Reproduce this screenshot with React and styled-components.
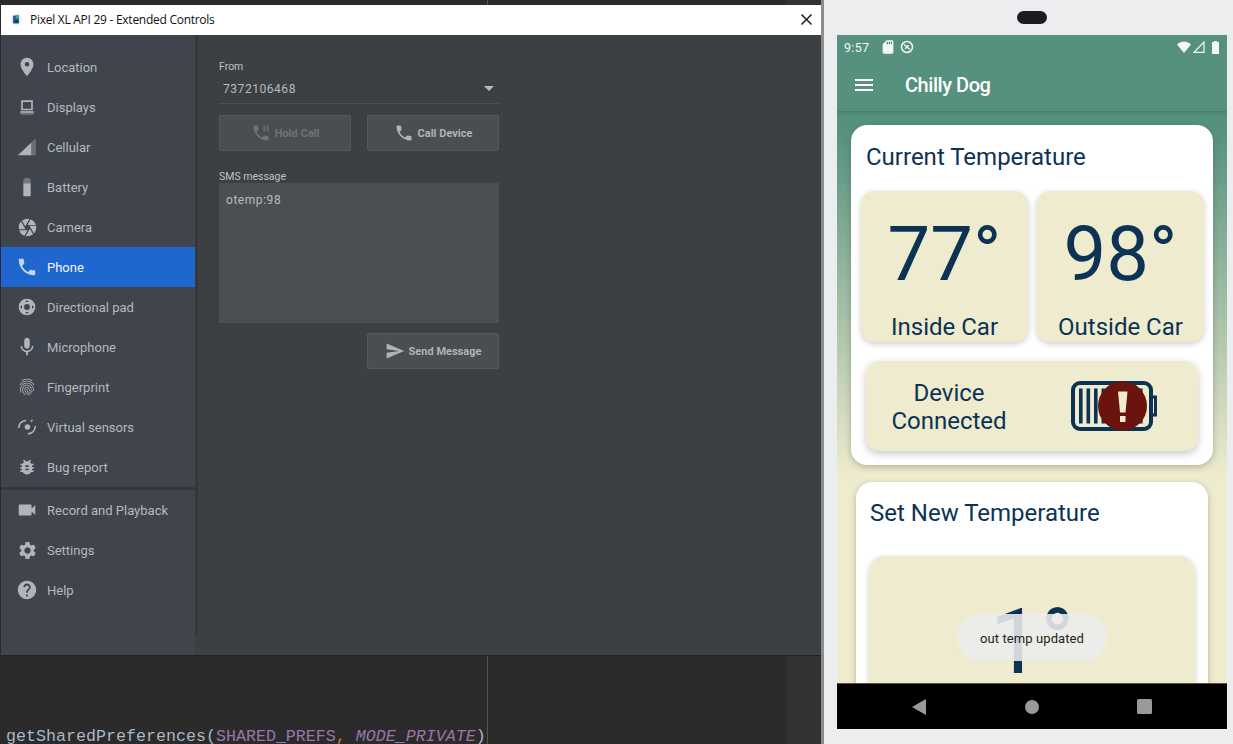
import React from "react";
import styled, { createGlobalStyle } from "styled-components";
import {
  MdLocationOn, MdCamera, MdPhone, MdMic, MdFingerprint, MdBugReport,
  MdVideocam, MdSettings, MdHelp, MdPhonePaused, MdSend, MdMenu, MdSdCard, MdClose,
} from "react-icons/md";

const Global = createGlobalStyle`
  html, body { margin: 0; padding: 0; background: #2b2b2b; overflow: hidden; }
  * { box-sizing: border-box; }
`;

const Desktop = styled.div`
  position: relative;
  width: 1233px;
  height: 744px;
  overflow: hidden;
  background: #2b2b2b;
  font-family: Roboto, sans-serif;
`;

/* ---------- IDE behind the windows ---------- */
const Ide = styled.div`
  position: absolute;
  inset: 0 412px 0 0;
  background: linear-gradient(to right, #2b2b2b 786px, #313335 786px);
`;
const Margin = styled.div`
  position: absolute;
  left: 487px;
  top: 0;
  bottom: 0;
  width: 1px;
  background: #555;
`;
const CodeLine = styled.div`
  position: absolute;
  left: 6px;
  top: ${(p) => p.$top}px;
  font: 16.67px/20px "Liberation Mono", monospace;
  color: #a9b7c6;
  white-space: pre;
`;
const Const = styled.span`
  color: #9876aa;
  font-style: ${(p) => (p.$italic ? "italic" : "normal")};
`;
const Comma = styled.span`
  color: #cc7832;
`;

/* ---------- Extended controls window ---------- */
const ControlsWindow = styled.div`
  position: absolute;
  left: 1px;
  top: 5px;
  width: 820px;
  height: 650px;
  display: flex;
  flex-direction: column;
  background: #3c4043;
  box-shadow: 0 1px 0 #222;
`;
const TitleBar = styled.div`
  height: 30px;
  flex: none;
  background: #fff;
  display: flex;
  align-items: center;
  padding: 0 0 1px 10px;
  color: #111;
  font: 12px "Open Sans", sans-serif;
`;
const TitleText = styled.span`
  margin-left: 8px;
  flex: 1;
  letter-spacing: -0.27px;
`;
const CloseButton = styled.span`
  margin-right: 5px;
  display: flex;
  font-size: 19px;
  color: #222;
`;
const WindowBody = styled.div`
  flex: 1;
  display: flex;
  min-height: 0;
`;
const Sidebar = styled.nav`
  width: 194px;
  flex: none;
  background: #40444c;
  padding-top: 12px;
  display: flex;
  flex-direction: column;
`;
const SideDividerColumn = styled.div`
  width: 3px;
  height: 600px;
  flex: none;
  background: #35383b;
`;
const NavRow = styled.div`
  height: 40px;
  flex: none;
  display: flex;
  align-items: center;
  padding-left: 14px;
  gap: 8px;
  font-size: 13px;
  color: ${(p) => (p.$active ? "#f2f5fa" : "#b6b9bd")};
  background: ${(p) => (p.$active ? "#1f67cf" : "transparent")};
`;
const NavIcon = styled.span`
  width: 24px;
  height: 24px;
  display: flex;
  align-items: center;
  justify-content: center;
  font-size: ${(p) => p.$size || 20}px;
  color: ${(p) => (p.$active ? "#c4d6f0" : "#b2b4b7")};
  svg { display: block; }
`;
const NavDivider = styled.div`
  height: 3px;
  flex: none;
  background: #35383b;
`;
const Pane = styled.div`
  flex: 1;
  padding: 25px 0 0 21px;
`;
const PaneColumn = styled.div`
  width: 280px;
  display: flex;
  flex-direction: column;
`;
const SmallLabel = styled.div`
  font-size: 10.5px;
  line-height: 14px;
  color: #bfc1c3;
  margin-top: ${(p) => p.$top || 0}px;
`;
const Select = styled.div`
  margin-top: 4px;
  height: 26px;
  display: flex;
  align-items: center;
  justify-content: space-between;
  padding: 0 5px 4px 4px;
  border-bottom: 1px solid #4c5053;
  font-size: 12px;
  letter-spacing: 0.55px;
  color: #b9bbbd;
`;
const Caret = styled.span`
  width: 0;
  height: 0;
  border-left: 5px solid transparent;
  border-right: 5px solid transparent;
  border-top: 5px solid #b9bbbd;
`;
const ButtonRow = styled.div`
  display: flex;
  justify-content: ${(p) => (p.$end ? "flex-end" : "space-between")};
  margin-top: ${(p) => p.$top}px;
`;
const ActionButton = styled.div`
  width: 132px;
  height: 36px;
  display: flex;
  align-items: center;
  justify-content: center;
  gap: 4px;
  background: #4a4e51;
  border: 1px solid #56595c;
  border-radius: 2px;
  font-size: 11px;
  font-weight: 700;
  color: ${(p) => (p.$disabled ? "#6f7275" : "#b1b3b5")};
  svg { display: block; flex: none; }
`;
const SmsArea = styled.div`
  margin-top: -1px;
  height: 140px;
  background: #4b4f52;
  padding: 9px 7px;
  font-size: 12px;
  line-height: 16px;
  letter-spacing: 0.55px;
  color: #b9bbbd;
`;

/* ---------- Emulator ---------- */
const EmulatorFrame = styled.div`
  position: absolute;
  left: 821px;
  top: 0;
  right: 0;
  bottom: 0;
  background: #ecedef;
  border-left: 3px solid #8d8d8e;
  display: flex;
  flex-direction: column;
  padding-left: 13px;
`;
const BezelTop = styled.div`
  height: 35px;
  flex: none;
  width: 390px;
  display: flex;
  justify-content: center;
  padding-top: 11px;
`;
const Speaker = styled.div`
  width: 30px;
  height: 13px;
  border-radius: 7px;
  background: #1c1d20;
`;
const Screen = styled.div`
  position: relative;
  width: 390px;
  height: 694px;
  flex: none;
  display: flex;
  flex-direction: column;
  overflow: hidden;
`;
const AppBar = styled.header`
  flex: none;
  height: 76px;
  background: #55917e;
  box-shadow: 0 1px 4px rgba(0, 0, 0, 0.22);
  z-index: 1;
  color: #fff;
`;
const StatusBar = styled.div`
  height: 24px;
  display: flex;
  align-items: center;
  padding: 0 8px 0 7px;
  font-size: 12.5px;
  letter-spacing: 0.3px;
  color: #f3f7f5;
  svg { display: block; }
`;
const StatusLeft = styled.div`
  display: flex;
  align-items: center;
  flex: 1;
  gap: 4px;
`;
const StatusTime = styled.span`
  margin-right: 7px;
`;
const StatusRight = styled.div`
  display: flex;
  align-items: center;
  gap: 2px;
`;
const StatusSpacer = styled.span`
  width: 3px;
`;
const Toolbar = styled.div`
  height: 52px;
  display: flex;
  align-items: center;
  padding-left: 15px;
  gap: 29px;
  font-size: 20px;
  font-weight: 500;
  svg { display: block; }
`;
const ToolbarTitle = styled.span`
  letter-spacing: -0.45px;
`;
const Content = styled.main`
  flex: 1;
  min-height: 0;
  overflow: hidden;
  padding-top: 14px;
  background: linear-gradient(#55917e 0, #55917e 20px, #eeebce 365px);
`;
const Card = styled.section`
  background: #fff;
  border-radius: 16px;
  width: ${(p) => p.$width}px;
  margin-left: ${(p) => p.$left}px;
  margin-bottom: 17px;
  padding-bottom: 14px;
  box-shadow: 0 2px 6px rgba(60, 60, 30, 0.3);
`;
const CardTitle = styled.h2`
  margin: 0;
  font-size: 24px;
  line-height: 32px;
  font-weight: 400;
  color: #0c3354;
  padding: ${(p) => p.$top}px 0 0 ${(p) => p.$left}px;
`;
const TileRow = styled.div`
  display: flex;
  gap: 9px;
  margin: 18px 0 0 10px;
`;
const TempTile = styled.div`
  width: 167px;
  height: 151px;
  background: #eeebce;
  border-radius: 14px;
  box-shadow: 0 2px 6px rgba(0, 0, 0, 0.2);
  color: #0c3354;
  display: flex;
  flex-direction: column;
  align-items: center;
`;
const BigTemp = styled.div`
  font-size: 76px;
  line-height: 96px;
  margin-top: 15px;
`;
const TileLabel = styled.div`
  font-size: 24px;
  line-height: 28px;
  margin-top: 11px;
`;
const DeviceTile = styled.div`
  width: 332px;
  height: 90px;
  margin: 19px 0 0 15px;
  display: flex;
  align-items: center;
  background: #eeebce;
  border-radius: 14px;
  box-shadow: 0 3px 8px rgba(0, 0, 0, 0.22);
  color: #0c3354;
  svg { display: block; flex: none; }
`;
const DeviceText = styled.div`
  width: 166px;
  text-align: center;
  font-size: 24px;
  line-height: 28px;
  padding-top: 2px;
  margin-right: 39px;
`;
const SetTile = styled.div`
  width: 326px;
  height: 200px;
  margin: 27px 0 0 13px;
  background: #eeebce;
  border-radius: 16px;
  box-shadow: 0 2px 6px rgba(0, 0, 0, 0.18);
  color: #0c3354;
  text-align: center;
  font-size: 90px;
  line-height: 108px;
  padding-top: 33px;
`;
const Toast = styled.div`
  position: absolute;
  left: 120px;
  top: 579px;
  width: 150px;
  height: 47px;
  padding-top: 1px;
  border-radius: 24px;
  background: rgba(236, 237, 236, 0.88);
  display: flex;
  align-items: center;
  justify-content: center;
  font-size: 13px;
  letter-spacing: 0.1px;
  color: #222;
  z-index: 2;
`;
const NavBar = styled.div`
  height: 46px;
  flex: none;
  background: #000;
  z-index: 1;
  border-top: 1px solid #55553f;
  display: flex;
  align-items: center;
  justify-content: space-between;
  padding: 0 75px;
  svg { display: block; }
`;

const Displays = () => (
  <svg width="1em" height="1em" viewBox="0 0 24 24" fill="currentColor">
    <path fillRule="evenodd" d="M5 4h14v12H5zM7 6v8h10V6z" />
    <rect x="4" y="17" width="16" height="2" />
    <rect x="4" y="19.5" width="16" height="1.5" opacity=".6" />
  </svg>
);
const Cellular = () => (
  <svg width="1em" height="1em" viewBox="0 0 24 24" fill="currentColor">
    <path d="M1 22 17 7v15z" />
    <path d="M17 7l5.5-5.500V22H17z" opacity=".4" />
  </svg>
);
const BatteryNav = () => (
  <svg width="1em" height="1em" viewBox="0 0 24 24" fill="currentColor">
    <path d="M8 8h8v13a1 1 0 0 1-1 1H9a1 1 0 0 1-1-1z" />
    <path d="M8 8V4.300C8 3.600 8.600 3 9.300 3H10V2h4v1h.7c.7 0 1.300.6 1.300 1.300V8z" opacity=".45" />
  </svg>
);
const Dpad = () => (
  <svg width="1em" height="1em" viewBox="0 0 24 24" fill="currentColor">
    <path
      fillRule="evenodd"
      d="M12 2a10 10 0 1 0 0 20 10 10 0 0 0 0-20zM12 8.500a3.500 3.500 0 1 1 0 7 3.500 3.500 0 0 1 0-7z"
    />
    <path fill="#40444c" d="M12 3.500l2 2.500h-4zM12 20.500l-2-2.500h4zM3.500 12 6 10v4zM20.500 12 18 14v-4z" />
  </svg>
);
const Sensors = () => (
  <svg width="1em" height="1em" viewBox="0 0 24 24" fill="none" stroke="currentColor" strokeWidth="1.7">
    <circle cx="12.500" cy="12" r="3" fill="currentColor" stroke="none" />
    <path d="M3 13c.2-4 3-7.500 8-8" />
    <path d="M21 11c0 4.500-3 8-8 8.500" />
    <path d="M18 4.500l-2 1.500" />
  </svg>
);
const StatusData = () => (
  <svg width="14" height="14" viewBox="0 0 14 14" fill="none" stroke="#f3f7f5">
    <circle cx="7" cy="7" r="5.500" strokeWidth="1.500" />
    <path d="M4 4.500l6 5" strokeWidth="1.200" />
    <path d="M4.500 8.500l3-3.500h2L6 9z" fill="#f3f7f5" stroke="none" />
  </svg>
);
const StatusWifi = () => (
  <svg width="14" height="12" viewBox="0 0 14 12" fill="#f3f7f5">
    <path d="M7 12 0 3.500C2 1.500 4.500.500 7 .500s5 1 7 3z" />
  </svg>
);
const StatusSignal = () => (
  <svg width="12" height="12" viewBox="0 0 12 12" fill="none" stroke="#f3f7f5" strokeWidth="1.200">
    <path d="M1 11.300h10V1z" />
  </svg>
);
const StatusBattery = () => (
  <svg width="7" height="13" viewBox="0 0 7 13" fill="#f3f7f5">
    <path d="M2 0h3v1h2v12H0V1h2z" />
  </svg>
);
const WindowLogo = () => (
  <svg width="11" height="11" viewBox="0 0 11 11">
    <circle cx="5.500" cy="5.500" r="5.500" fill="#e8eef0" />
    <rect x="2" y="1.500" width="6" height="8" rx="1" fill="#27619e" />
    <rect x="5" y="1" width="3" height="3.500" fill="#3ba888" />
    <rect x="3.500" y="6" width="4" height="3" fill="#1b3c66" />
  </svg>
);
const Battery = () => (
  <svg width="86" height="50" viewBox="0 0 86 50">
    <rect x="2" y="2" width="78" height="46" rx="7" fill="none" stroke="#0c3354" strokeWidth="4" />
    <path d="M80 16h4.500v18H80" fill="none" stroke="#0c3354" strokeWidth="3" />
    {[8, 15.5, 23, 30.5, 38, 45.5, 53, 60.5, 68].map((x) => (
      <rect key={x} x={x} y="7.500" width="3.600" height="35" fill="#0c3354" />
    ))}
    <circle cx="51.500" cy="25" r="24.500" fill="#6b130d" />
    <path d="M47 10.500h9.500l-2 21h-5.500z" fill="#eeebce" />
    <rect x="49" y="35" width="5.500" height="6" fill="#eeebce" />
  </svg>
);

const topItems = [
  ["Location", MdLocationOn, 22],
  ["Displays", Displays, 20],
  ["Cellular", Cellular, 20],
  ["Battery", BatteryNav, 22],
  ["Camera", MdCamera, 21],
  ["Phone", MdPhone, 22],
  ["Directional pad", Dpad, 20],
  ["Microphone", MdMic, 22],
  ["Fingerprint", MdFingerprint, 20],
  ["Virtual sensors", Sensors, 22],
  ["Bug report", MdBugReport, 20],
];
const bottomItems = [
  ["Record and Playback", MdVideocam, 22],
  ["Settings", MdSettings, 21],
  ["Help", MdHelp, 22],
];

const NavItem = ({ label, Icon, size }) => {
  const active = label === "Phone";
  return (
    <NavRow $active={active}>
      <NavIcon $size={size} $active={active}><Icon /></NavIcon>
      {label}
    </NavRow>
  );
};

export default function App() {
  return (
    <Desktop>
      <Global />
      <Ide>
        <Margin />
        <CodeLine $top={727}>
          getSharedPreferences(<Const>SHARED_PREFS</Const><Comma>,</Comma> <Const $italic>MODE_PRIVATE</Const>)
        </CodeLine>
      </Ide>

      <ControlsWindow>
        <TitleBar>
          <WindowLogo />
          <TitleText>Pixel XL API 29 - Extended Controls</TitleText>
          <CloseButton><MdClose /></CloseButton>
        </TitleBar>
        <WindowBody>
          <Sidebar>
            {topItems.map(([label, Icon, size]) => (
              <NavItem key={label} label={label} Icon={Icon} size={size} />
            ))}
            <NavDivider />
            {bottomItems.map(([label, Icon, size]) => (
              <NavItem key={label} label={label} Icon={Icon} size={size} />
            ))}
          </Sidebar>
          <SideDividerColumn />
          <Pane>
            <PaneColumn>
              <SmallLabel>From</SmallLabel>
              <Select>7372106468<Caret /></Select>
              <ButtonRow $top={11}>
                <ActionButton $disabled><MdPhonePaused size={20} />Hold Call</ActionButton>
                <ActionButton><MdPhone size={20} />Call Device</ActionButton>
              </ButtonRow>
              <SmallLabel $top={19}>SMS message</SmallLabel>
              <SmsArea>otemp:98</SmsArea>
              <ButtonRow $top={10} $end>
                <ActionButton><MdSend size={20} />Send Message</ActionButton>
              </ButtonRow>
            </PaneColumn>
          </Pane>
        </WindowBody>
      </ControlsWindow>

      <EmulatorFrame>
        <BezelTop><Speaker /></BezelTop>
        <Screen>
          <AppBar>
            <StatusBar>
              <StatusLeft>
                <StatusTime>9:57</StatusTime>
                <MdSdCard size={16} />
                <StatusData />
              </StatusLeft>
              <StatusRight>
                <StatusWifi />
                <StatusSignal />
                <StatusSpacer />
                <StatusBattery />
              </StatusRight>
            </StatusBar>
            <Toolbar>
              <MdMenu size={24} />
              <ToolbarTitle>Chilly Dog</ToolbarTitle>
            </Toolbar>
          </AppBar>
          <Content>
            <Card $width={362} $left={14}>
              <CardTitle $top={16} $left={15}>Current Temperature</CardTitle>
              <TileRow>
                <TempTile><BigTemp>77°</BigTemp><TileLabel>Inside Car</TileLabel></TempTile>
                <TempTile><BigTemp>98°</BigTemp><TileLabel>Outside Car</TileLabel></TempTile>
              </TileRow>
              <DeviceTile>
                <DeviceText>Device Connected</DeviceText>
                <Battery />
              </DeviceTile>
            </Card>
            <Card $width={352} $left={19}>
              <CardTitle $top={15} $left={14}>Set New Temperature</CardTitle>
              <SetTile>1°</SetTile>
            </Card>
          </Content>
          <Toast>out temp updated</Toast>
          <NavBar>
            <svg width="14" height="16" viewBox="0 0 14 16" fill="#9a9a9a"><path d="M14 0v16L0 8z" /></svg>
            <svg width="14" height="14" viewBox="0 0 14 14" fill="#9a9a9a"><circle cx="7" cy="7" r="7" /></svg>
            <svg width="15" height="15" viewBox="0 0 15 15" fill="#9a9a9a"><rect width="15" height="15" rx="1.500" /></svg>
          </NavBar>
        </Screen>
      </EmulatorFrame>
    </Desktop>
  );
}
